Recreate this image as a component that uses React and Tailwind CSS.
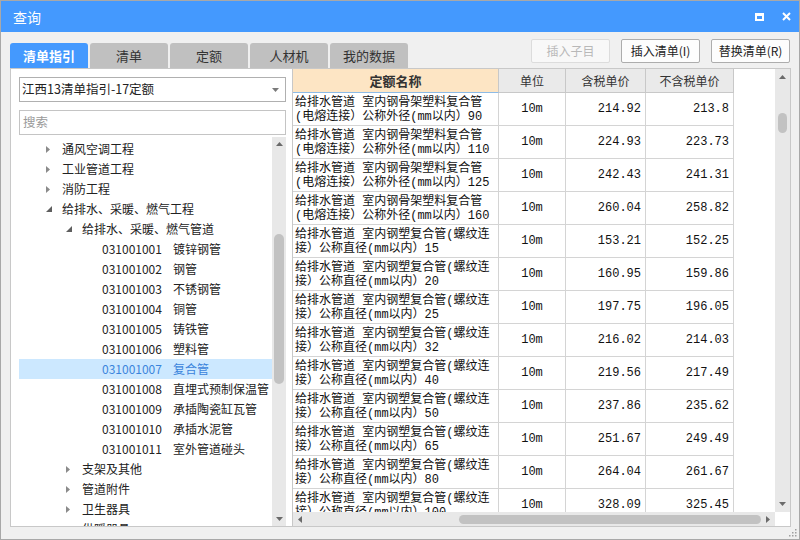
import React from "react";

const tree = [
  { lvl: 1, t: "通风空调工程", icon: "r" },
  { lvl: 1, t: "工业管道工程", icon: "r" },
  { lvl: 1, t: "消防工程", icon: "r" },
  { lvl: 1, t: "给排水、采暖、燃气工程", icon: "d" },
  { lvl: 2, t: "给排水、采暖、燃气管道", icon: "d" },
  { lvl: 3, code: "031001001", t: "镀锌钢管" },
  { lvl: 3, code: "031001002", t: "钢管" },
  { lvl: 3, code: "031001003", t: "不锈钢管" },
  { lvl: 3, code: "031001004", t: "铜管" },
  { lvl: 3, code: "031001005", t: "铸铁管" },
  { lvl: 3, code: "031001006", t: "塑料管" },
  { lvl: 3, code: "031001007", t: "复合管", sel: true },
  { lvl: 3, code: "031001008", t: "直埋式预制保温管" },
  { lvl: 3, code: "031001009", t: "承插陶瓷缸瓦管" },
  { lvl: 3, code: "031001010", t: "承插水泥管" },
  { lvl: 3, code: "031001011", t: "室外管道碰头" },
  { lvl: 2, t: "支架及其他", icon: "r" },
  { lvl: 2, t: "管道附件", icon: "r" },
  { lvl: 2, t: "卫生器具", icon: "r" },
  { lvl: 2, t: "供暖器具", icon: "r" },
];

const A1 = "给排水管道 室内钢骨架塑料复合管";
const A2 = (n) => `(电熔连接）公称外径(mm以内）${n}`;
const B1 = "给排水管道 室内钢塑复合管(螺纹连";
const B2 = (n) => `接）公称直径(mm以内）${n}`;

const rows = [
  [A1, A2("90"), "214.92", "213.8"],
  [A1, A2("110"), "224.93", "223.73"],
  [A1, A2("125"), "242.43", "241.31"],
  [A1, A2("160"), "260.04", "258.82"],
  [B1, B2("15"), "153.21", "152.25"],
  [B1, B2("20"), "160.95", "159.86"],
  [B1, B2("25"), "197.75", "196.05"],
  [B1, B2("32"), "216.02", "214.03"],
  [B1, B2("40"), "219.56", "217.49"],
  [B1, B2("50"), "237.86", "235.62"],
  [B1, B2("65"), "251.67", "249.49"],
  [B1, B2("80"), "264.04", "261.67"],
  [B1, B2("100"), "328.09", "325.45"],
];

const TriRight = ({ c = "#8a8a8a" }) => (
  <svg width="4" height="7" viewBox="0 0 4 7">
    <path d="M0 0 L4 3.5 L0 7 Z" fill={c} />
  </svg>
);
const TriExp = () => (
  <svg width="6" height="6" viewBox="0 0 6 6">
    <path d="M6 0 L6 6 L0 6 Z" fill="#5e5e5e" />
  </svg>
);
const TriUp = () => (
  <svg width="7" height="4" viewBox="0 0 7 4">
    <path d="M0 4 L3.5 0 L7 4 Z" fill="#6a6a6a" />
  </svg>
);
const TriDown = () => (
  <svg width="7" height="4" viewBox="0 0 7 4">
    <path d="M0 0 L3.5 4 L7 0 Z" fill="#6a6a6a" />
  </svg>
);
const TriLeft = () => (
  <svg width="4" height="7" viewBox="0 0 4 7">
    <path d="M4 0 L0 3.5 L4 7 Z" fill="#6a6a6a" />
  </svg>
);

function TreeRow({ r }) {
  const base = "h-[20px] flex items-center whitespace-nowrap text-[12px] leading-[20px]";
  if (r.lvl === 3) {
    return (
      <div className={r.sel ? base + " bg-[#cce8ff] text-[#3a84dc]" : base + " text-[#222]"}>
        <span className="pl-[83px] w-[154px] shrink-0">{r.code}</span>
        <span>{r.t}</span>
      </div>
    );
  }
  return (
    <div className={base + " text-[#222]"}>
      <span className={r.lvl === 1 ? "pl-[27px] shrink-0" : "pl-[47px] shrink-0"} />
      <span className="w-[16px] shrink-0 flex items-center">
        {r.icon === "r" ? <TriRight /> : <TriExp />}
      </span>
      <span>{r.t}</span>
    </div>
  );
}

export default function App() {
  const cell = "font-['Liberation_Mono','Noto_Sans_CJK_SC',monospace] text-[12px] text-[#111]";
  return (
    <div className="w-[800px] h-[540px] bg-[#f0f0f0] border border-[#a8a8a8] flex flex-col overflow-hidden font-['Noto_Sans_CJK_SC',sans-serif] text-[#222]">
      {/* Title bar */}
      <div className="h-[31px] shrink-0 bg-[#4499fe] flex items-center justify-between pl-[12px] pr-[8px]">
        <span className="text-white text-[14px] leading-none">查询</span>
        <div className="flex items-center gap-[18px]">
          <div className="w-[9px] h-[8px] border-2 border-t-[3px] border-white" />
          <svg width="9" height="9" viewBox="0 0 9 9">
            <path d="M1 1 L8 8 M8 1 L1 8" stroke="#fff" strokeWidth="2" />
          </svg>
        </div>
      </div>

      {/* Tabs and buttons */}
      <div className="h-[36px] shrink-0 flex justify-between pl-[9px] pr-[9px]">
        <div className="self-end flex gap-[2px]">
          <div className="w-[78px] h-[25px] rounded-t-[3px] bg-[#4499fe] text-white text-[13px] font-bold flex items-center justify-center">
            清单指引
          </div>
          <div className="w-[78px] h-[25px] rounded-t-[3px] bg-[#c0c0c0] text-[#333] text-[13px] flex items-center justify-center">
            清单
          </div>
          <div className="w-[78px] h-[25px] rounded-t-[3px] bg-[#c0c0c0] text-[#333] text-[13px] flex items-center justify-center">
            定额
          </div>
          <div className="w-[78px] h-[25px] rounded-t-[3px] bg-[#c0c0c0] text-[#333] text-[13px] flex items-center justify-center">
            人材机
          </div>
          <div className="w-[78px] h-[25px] rounded-t-[3px] bg-[#c0c0c0] text-[#333] text-[13px] flex items-center justify-center">
            我的数据
          </div>
        </div>
        <div className="mt-[7px] flex gap-[11px]">
          <div className="w-[79px] h-[24px] rounded-[2px] border border-[#dcdcdc] bg-[#f8f8f8] text-[#b8b8b8] text-[12px] flex items-center justify-center">
            插入子目
          </div>
          <div className="w-[79px] h-[24px] rounded-[2px] border border-[#adadad] bg-[#fdfdfd] text-[#222] text-[12px] flex items-center justify-center">
            插入清单(I)
          </div>
          <div className="w-[79px] h-[24px] rounded-[2px] border border-[#adadad] bg-[#fdfdfd] text-[#222] text-[12px] flex items-center justify-center">
            替换清单(R)
          </div>
        </div>
      </div>

      {/* Main */}
      <div className="h-[459px] shrink-0 flex pl-[9px] pr-[8px]">
        {/* Left panel */}
        <div className="w-[282px] shrink-0 bg-white border-l border-y border-[#c8c8c8] flex flex-col pl-[8px]">
          <div className="mt-[8px] w-[267px] h-[25px] border border-[#b0b0b0] bg-white flex items-center justify-between pl-[2px] pr-[6px]">
            <span className="text-[12.5px] text-[#222] leading-none">江西13清单指引-17定额</span>
            <svg width="7" height="4" viewBox="0 0 7 4">
              <path d="M0 0 L3.5 4 L7 0 Z" fill="#7a7a7a" />
            </svg>
          </div>
          <div className="mt-[8px] w-[267px] h-[25px] border border-[#c4c4c4] bg-white flex items-center pl-[3px]">
            <span className="text-[12.5px] text-[#9a9a9a] leading-none">搜索</span>
          </div>
          <div className="mt-[2px] flex-1 min-h-0 flex">
            <div className="w-[253px] shrink-0 overflow-hidden pt-[2px]">
              {tree.map((r, i) => (
                <TreeRow key={i} r={r} />
              ))}
            </div>
            <div className="w-[14px] shrink-0 bg-[#e8e8e8] flex flex-col items-center">
              <div className="h-[14px] flex items-center justify-center">
                <TriUp />
              </div>
              <div className="mt-[83px] w-[10px] h-[150px] rounded-full bg-[#c2c2c2]" />
              <div className="flex-1" />
              <div className="h-[14px] flex items-center justify-center">
                <TriDown />
              </div>
            </div>
          </div>
        </div>

        {/* Right table panel */}
        <div className="flex-1 min-w-0 bg-white border border-[#c8c8c8] flex flex-col">
          <div className="flex-1 min-h-0 flex">
            <div className="flex-1 min-w-0 overflow-hidden">
              {/* header */}
              <div className="h-[24px] flex">
                <div className="w-[206px] shrink-0 bg-[#fde5c4] border-r border-[#c8c8c8] border-b border-b-[#8dbbe6] flex items-center justify-center text-[13px] font-bold text-[#333]">
                  定额名称
                </div>
                <div className="w-[67px] shrink-0 bg-[#eaeaea] border-r border-b border-[#c8c8c8] flex items-center justify-center text-[12px] text-[#333]">
                  单位
                </div>
                <div className="w-[80px] shrink-0 bg-[#eaeaea] border-r border-b border-[#c8c8c8] flex items-center justify-center text-[12px] text-[#333]">
                  含税单价
                </div>
                <div className="w-[88px] shrink-0 bg-[#eaeaea] border-r border-b border-[#c8c8c8] flex items-center justify-center text-[12px] text-[#333]">
                  不含税单价
                </div>
              </div>
              {rows.map((r, i) => (
                <div key={i} className="h-[33px] flex">
                  <div className={"w-[206px] shrink-0 border-r border-b border-[#d4d4d4] pl-[2px] pt-[3px] leading-[14px] whitespace-nowrap overflow-hidden " + cell}>
                    <div>{r[0]}</div>
                    <div>{r[1]}</div>
                  </div>
                  <div className={"w-[67px] shrink-0 border-r border-b border-[#d4d4d4] flex items-center justify-center " + cell}>
                    10m
                  </div>
                  <div className={"w-[80px] shrink-0 border-r border-b border-[#d4d4d4] flex items-center justify-end pr-[4px] " + cell}>
                    {r[2]}
                  </div>
                  <div className={"w-[88px] shrink-0 border-r border-b border-[#d4d4d4] flex items-center justify-end pr-[4px] " + cell}>
                    {r[3]}
                  </div>
                </div>
              ))}
            </div>
            <div className="w-[15px] shrink-0 bg-[#e8e8e8] flex flex-col items-center">
              <div className="h-[16px] flex items-center justify-center">
                <TriUp />
              </div>
              <div className="mt-[28px] w-[9px] h-[20px] rounded-full bg-[#c2c2c2]" />
              <div className="flex-1" />
              <div className="h-[16px] flex items-center justify-center">
                <TriDown />
              </div>
            </div>
          </div>
          <div className="h-[14px] shrink-0 flex">
            <div className="flex-1 bg-[#e8e8e8] flex items-center">
              <div className="w-[14px] flex items-center justify-center">
                <TriLeft />
              </div>
              <div className="w-[152px]" />
              <div className="w-[302px] h-[9px] rounded-full bg-[#c2c2c2]" />
              <div className="w-[14px] flex items-center justify-center">
                <TriRight c="#6a6a6a" />
              </div>
            </div>
            <div className="w-[15px] bg-white" />
          </div>
        </div>
      </div>

      {/* bottom strip */}
      <div className="flex-1 flex justify-end items-end pr-[2px] pb-[2px]">
        <svg width="8" height="8" viewBox="0 0 8 8">
          <rect x="6" y="0" width="1.5" height="1.5" fill="#a0a0a0" />
          <rect x="3" y="3" width="1.5" height="1.5" fill="#a0a0a0" />
          <rect x="6" y="3" width="1.5" height="1.5" fill="#a0a0a0" />
          <rect x="0" y="6" width="1.5" height="1.5" fill="#a0a0a0" />
          <rect x="3" y="6" width="1.5" height="1.5" fill="#a0a0a0" />
          <rect x="6" y="6" width="1.5" height="1.5" fill="#a0a0a0" />
        </svg>
      </div>
    </div>
  );
}
